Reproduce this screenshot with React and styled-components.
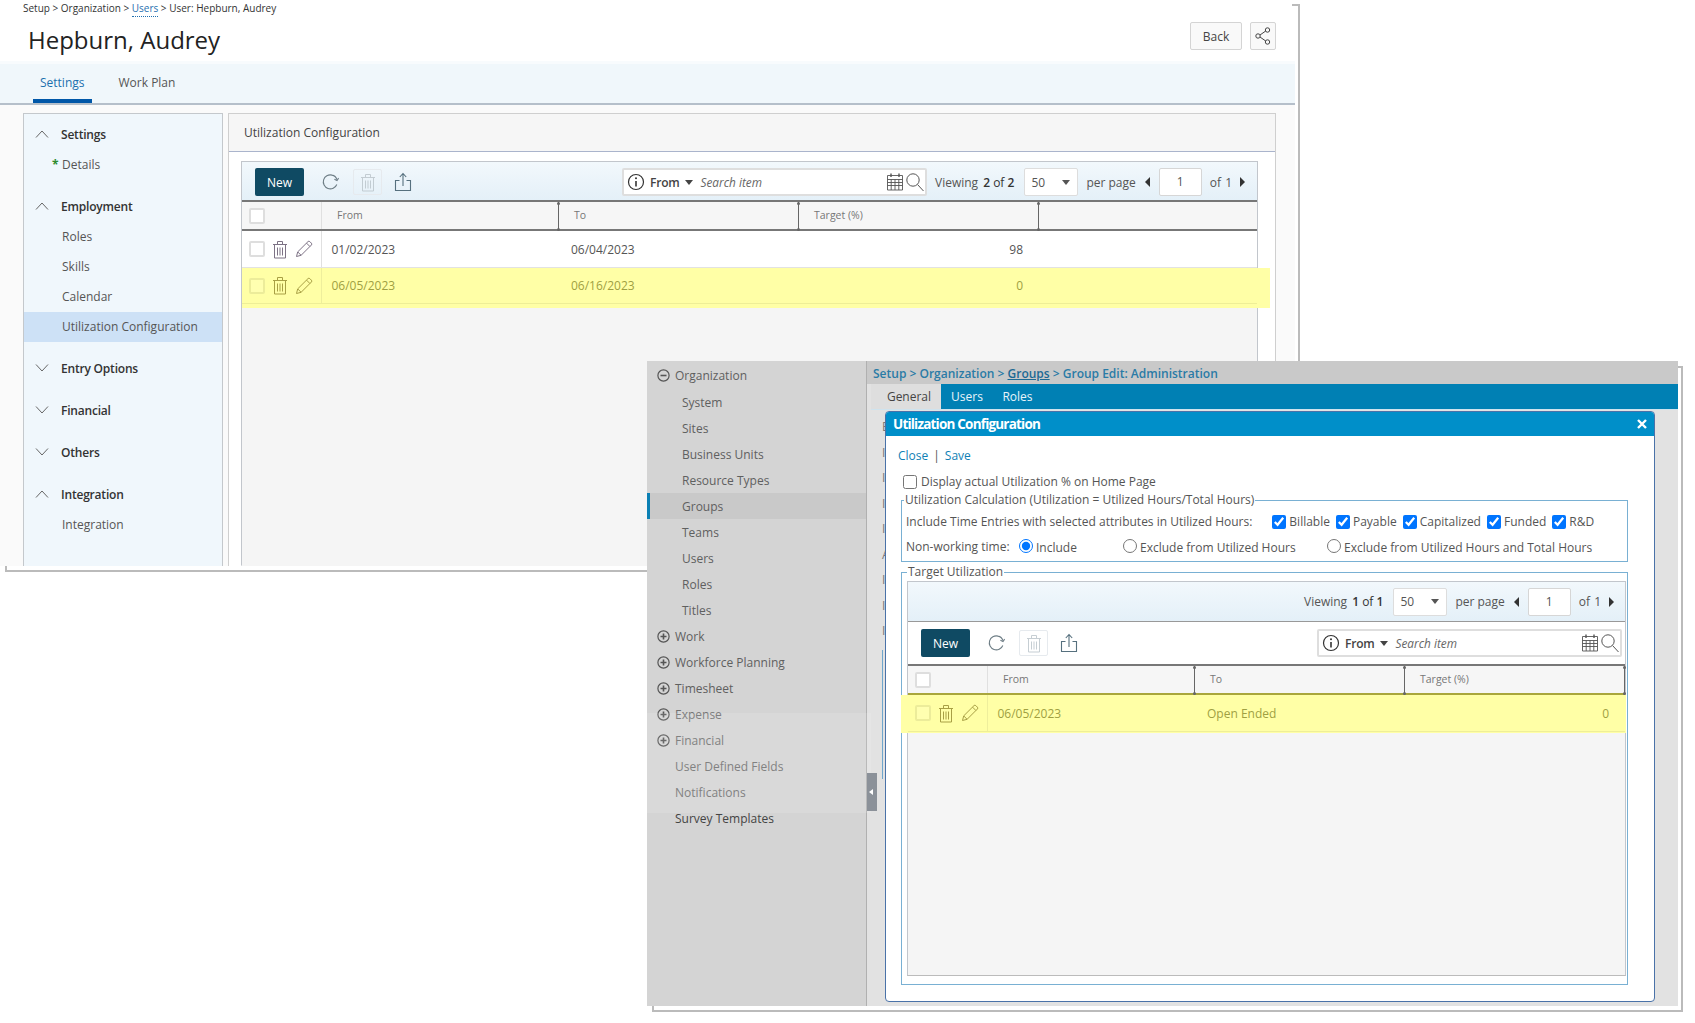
import React from "react";
import styled, { createGlobalStyle } from "styled-components";

const Global = createGlobalStyle`
  html, body { margin: 0; padding: 0; background: #fff; }
  body { font-family: "Open Sans", "Liberation Sans", sans-serif; font-size: 12px; color: #555; }
  * { box-sizing: border-box; }
`;

const Page = styled.div`
  position: relative;
  width: 1695px;
  height: 1023px;
  overflow: hidden;
  background: #fff;
`;

const Window = styled.section`
  position: absolute;
  left: ${(p) => p.$left}px;
  top: ${(p) => p.$top}px;
  width: ${(p) => p.$w}px;
  height: ${(p) => p.$h}px;
  display: flex;
  &::after {
    content: "";
    position: absolute;
    left: 5px;
    top: ${(p) => p.$frameTop}px;
    right: -5px;
    bottom: -6px;
    border-right: 2px solid #bbb;
    border-bottom: 2px solid #bbb;
    background:
      linear-gradient(#bbb, #bbb) left bottom / 2px 6px no-repeat,
      linear-gradient(#bbb, #bbb) right top / 6px 2px no-repeat;
    pointer-events: none;
    z-index: 0;
  }
`;

/* ---------- first window ---------- */
const Column = styled.div`
  flex: 1;
  min-width: 0;
  display: flex;
  flex-direction: column;
  position: relative;
  z-index: 1;
`;
const Crumbs = styled.div`
  height: 18px;
  padding-left: 23px;
  font-size: 10px;
  line-height: 17px;
  color: #333;
  white-space: nowrap;
`;
const CrumbLink = styled.span`
  color: #1f6fb0;
  border-bottom: 1px dotted #1f6fb0;
  padding-bottom: 1px;
`;
const TitleRow = styled.div`
  height: 43px;
  display: flex;
  justify-content: space-between;
  padding: 4px 19px 0 28px;
`;
const Title = styled.h1`
  margin: 1px 0 0;
  font-size: 24px;
  line-height: 34px;
  font-weight: 400;
  color: #222;
`;
const TitleActions = styled.div`
  display: flex;
  gap: 8px;
  align-items: flex-start;
`;
const PlainButton = styled.button`
  height: 28px;
  width: ${(p) => p.$w}px;
  padding: 0;
  display: flex;
  align-items: center;
  justify-content: center;
  border: 1px solid #d4d4d4;
  border-radius: 2px;
  background: #f9f9f9;
  font: inherit;
  color: #444;
`;
const TabBand = styled.nav`
  height: 44px;
  flex: none;
  display: flex;
  gap: 20px;
  padding-left: 33px;
  border-top: 3px solid #f8fbfd;
  border-bottom: 2px solid #b5bfca;
  background: #f0f7fb;
`;
const Tab = styled.div`
  height: 39px;
  padding: 0 7px;
  margin-bottom: 0;
  line-height: 38px;
  color: ${(p) => (p.$active ? "#1c6fae" : "#555")};
  border-bottom: 4px solid ${(p) => (p.$active ? "#0057a8" : "transparent")};
`;
const Body = styled.div`
  flex: 1;
  min-height: 0;
  display: flex;
  gap: 5px;
  padding: 8px 19px 0 23px;
  background: #fafafa;
`;
const Nav = styled.aside`
  width: 200px;
  flex: none;
  padding-top: 6px;
  border: 1px solid #c4c8cc;
  border-bottom: 0;
  background: #f0f7fc;
`;
const NavHead = styled.div`
  height: 30px;
  margin-top: ${(p) => (p.$first ? 0 : 12)}px;
  padding-bottom: 2px;
  display: flex;
  align-items: center;
  gap: 12px;
  padding-left: 11px;
  font-weight: 600;
  color: #333;
  letter-spacing: -0.2px;
`;
const NavItem = styled.div`
  height: 30px;
  padding-left: 38px;
  line-height: 30px;
  color: #555;
  background: ${(p) => (p.$active ? "#cde1f6" : "transparent")};
`;
const Star = styled.span`
  display: inline-block;
  width: 10px;
  margin-left: -10px;
  color: #2e8b2e;
  font-weight: 700;
`;
const Panel = styled.main`
  flex: 1;
  min-width: 0;
  display: flex;
  flex-direction: column;
  border: 1px solid #cfcfcf;
  border-bottom: 0;
  background: #fff;
`;
const PanelHead = styled.div`
  height: 38px;
  flex: none;
  padding-left: 15px;
  line-height: 37px;
  font-weight: 500;
  color: #444;
  background: #f6f6f6;
  border-bottom: 1px solid #aab4cc;
`;
const PanelBody = styled.div`
  flex: 1;
  min-height: 0;
  display: flex;
  padding: 9px 17px 0 12px;
`;
const EdgeTab = styled.div`
  position: absolute;
  left: 0;
  top: 410px;
  width: 3px;
  height: 38px;
  background: #8a9199;
`;

/* ---------- data grid ---------- */
const Grid = styled.div`
  flex: 1;
  min-width: 0;
  display: flex;
  flex-direction: column;
  border: 1px solid #c2c6cc;
  border-bottom-color: ${(p) => (p.$closed ? "#bbb" : "transparent")};
  background: #f5f5f5;
`;
const Bar = styled.div`
  height: ${(p) => p.$h}px;
  flex: none;
  display: flex;
  align-items: center;
  padding: ${(p) => p.$pt || 0}px ${(p) => p.$pr}px 0 13px;
  background: ${(p) => (p.$plain ? "#fff" : "linear-gradient(#f2f8fc, #e4f0f8)")};
  border-bottom: ${(p) => p.$line}px solid ${(p) => (p.$line > 1 ? "#777" : "#999")};
`;
const NewButton = styled.button`
  width: 49px;
  height: 28px;
  padding: 0;
  border: 0;
  border-radius: 2px;
  background: #0f4a63;
  color: #fff;
  font: 500 12px "Open Sans", sans-serif;
`;
const ToolIcon = styled.span`
  width: 22px;
  height: 22px;
  margin-left: ${(p) => p.$ml}px;
  display: flex;
  align-items: center;
  justify-content: center;
`;
const DisabledBox = styled.span`
  width: 29px;
  height: 26px;
  margin-left: 11px;
  display: flex;
  align-items: center;
  justify-content: center;
  border: 1px solid #e6eaee;
  border-radius: 2px;
`;
const Search = styled.div`
  width: 305px;
  height: 28px;
  margin-left: auto;
  display: flex;
  align-items: center;
  padding-left: 3px;
  border: 2px solid #dedede;
  border-radius: 2px;
  background: #fff;
`;
const FromText = styled.span`
  margin-left: 5px;
  font-weight: 600;
  color: #444;
  letter-spacing: -0.2px;
`;
const Placeholder = styled.span`
  flex: 1;
  margin-left: 8px;
  font-size: 11.8px;
  font-style: italic;
  color: #666;
`;
const Pager = styled.div`
  margin-left: ${(p) => p.$ml}px;
  display: flex;
  align-items: center;
  white-space: nowrap;
  color: #555;
`;
const Strong = styled.b`
  font-weight: 600;
  color: #333;
  margin-left: 5px;
`;
const OfText = styled.span`
  font-weight: 400;
`;
const SelectBox = styled.div`
  width: 54px;
  height: 28px;
  margin-left: 10px;
  display: flex;
  align-items: center;
  justify-content: space-between;
  padding: 0 7px 0 6px;
  border: 1px solid #ddd;
  border-radius: 2px;
  background: #fff;
`;
const PerPage = styled.span`
  margin-left: 8px;
`;
const PageInput = styled.div`
  width: 43px;
  height: 28px;
  margin: 0 8px 0 9px;
  text-align: center;
  line-height: 26px;
  border: 1px solid #d6d6d6;
  border-radius: 2px;
  background: #fff;
`;
const OfPages = styled.span`
  word-spacing: 1px;
`;
const Arrow = styled.span`
  width: 0;
  height: 0;
  margin: ${(p) => (p.$left ? "0 0 0 9px" : "0 0 0 8px")};
  border-top: 5.5px solid transparent;
  border-bottom: 5.5px solid transparent;
  ${(p) => (p.$left ? "border-right: 5px solid #333;" : "border-left: 5px solid #333;")}
`;
const HeaderRow = styled.div`
  height: ${(p) => p.$h}px;
  flex: none;
  display: grid;
  grid-template-columns: ${(p) => p.$cols};
  background: #f6f6f6;
  border-bottom: 2px solid ${(p) => p.$line};
`;
const HeaderCell = styled.div`
  position: relative;
  padding-left: 15px;
  line-height: 27px;
  font-size: 10.5px;
  color: #777;
`;
const Handle = styled.i`
  position: absolute;
  right: 0;
  top: 0;
  bottom: -2px;
  width: 1px;
  background: #666;
  &::before, &::after {
    content: "";
    position: absolute;
    left: -1px;
    width: 3px;
    height: 3px;
    border-radius: 50%;
    background: #666;
  }
  &::before { top: 0; }
  &::after { bottom: 0; }
`;
const RowCheckCell = styled.div`
  display: flex;
  align-items: center;
  padding-left: 7px;
  border-right: 1px solid ${(p) => (p.$hl ? "#eeee9c" : "#e0e0e0")};
`;
const Box = styled.span`
  width: 16px;
  height: 16px;
  flex: none;
  border: 2px solid ${(p) => (p.$hl ? "#ecec9a" : "#dedede")};
  border-radius: 2px;
  background: ${(p) => (p.$hl ? "#ffffb0" : "#fff")};
`;
const DataRow = styled.div`
  height: ${(p) => p.$h}px;
  display: grid;
  grid-template-columns: ${(p) => p.$cols};
  align-items: stretch;
  background: ${(p) => (p.$hl ? "transparent" : "#fff")};
  border-bottom: 1px solid ${(p) => (p.$hl ? "#eeee98" : "#e2e2e2")};
  color: ${(p) => (p.$hl ? "#a09f42" : "#555")};
`;
const Band = styled.div`
  flex: none;
  background: #ffffa6;
  margin: 0 ${(p) => -p.$right}px 0 ${(p) => -p.$left}px;
  padding: 0 ${(p) => p.$right}px ${(p) => p.$bottom}px ${(p) => p.$left}px;
`;
const Cell = styled.div`
  padding-left: ${(p) => p.$pl}px;
  padding-right: ${(p) => p.$pr || 0}px;
  display: flex;
  align-items: center;
  justify-content: ${(p) => (p.$end ? "flex-end" : "flex-start")};
`;
const Trash = styled.span`
  width: 18px;
  margin-left: 6px;
  display: flex;
  justify-content: center;
`;
const Pencil = styled.span`
  width: 20px;
  margin-left: 5px;
  display: flex;
  justify-content: center;
`;

/* ---------- second window ---------- */
const Side = styled.aside`
  width: 220px;
  flex: none;
  padding-top: 2px;
  background: #d4d4d4;
  border-right: 1px solid #b0b0b0;
  position: relative;
  z-index: 1;
  color: #5f6060;
`;
const SideRow = styled.div`
  height: 26px;
  display: flex;
  align-items: center;
  gap: 5px;
  padding-left: ${(p) => p.$pl}px;
  font-size: 12px;
  color: ${(p) => p.$color || "#5f6060"};
  background: ${(p) => (p.$active ? "#c9c9c9" : "transparent")};
  box-shadow: ${(p) => (p.$active ? "inset 3px 0 0 #0b80b4" : "none")};
  &:first-child { padding-bottom: 2px; }
`;
const FadeBand = styled.div`
  position: absolute;
  left: 0;
  top: 352px;
  width: 224px;
  height: 100px;
  background: rgba(255, 255, 255, 0.12);
  z-index: 2;
  pointer-events: none;
`;
const Collapse = styled.div`
  position: absolute;
  left: 220px;
  top: 412px;
  width: 10px;
  height: 38px;
  display: flex;
  align-items: center;
  padding-left: 2px;
  background: #8b9199;
  z-index: 3;
  &::before {
    content: "";
    border-top: 3.5px solid transparent;
    border-bottom: 3.5px solid transparent;
    border-right: 4px solid #fff;
  }
`;
const WorkArea = styled.div`
  flex: 1;
  min-width: 0;
  display: flex;
  flex-direction: column;
  position: relative;
  z-index: 1;
  background: #e2e2e2;
`;
const BlueCrumbs = styled.div`
  height: 23px;
  flex: none;
  padding-left: 6px;
  line-height: 25px;
  font-weight: 600;
  color: #2a7ba6;
  background: #c9c9c9;
  white-space: nowrap;
`;
const CrumbUnder = styled.u`
  color: #1d6a94;
`;
const BlueTabs = styled.div`
  height: 26px;
  flex: none;
  margin-left: 4px;
  display: flex;
  background: #0080b4;
  border-bottom: 1px solid #cfe3ee;
  color: #e8f4fa;
`;
const BlueTab = styled.div`
  ${(p) => p.$active && "background: #dedede; color: #444; padding-left: 6px;"}
  width: ${(p) => p.$w}px;
  text-align: center;
  line-height: 26px;
`;
const Behind = styled.div`
  flex: 1;
  margin-left: 4px;
  padding: 4px 0 0 11px;
  color: #777;
  line-height: 25.5px;
`;
const BehindEdge = styled.div`
  height: 129px;
  margin-top: 6px;
  border-left: 1px solid #6fa6cc;
`;
const Dialog = styled.div`
  position: absolute;
  left: 18px;
  top: 50px;
  width: 770px;
  height: 591px;
  display: flex;
  flex-direction: column;
  background: #fff;
  border: 1px solid #4a72a8;
  border-radius: 4px;
  overflow: hidden;
`;
const DialogBar = styled.div`
  height: 24px;
  flex: none;
  display: flex;
  align-items: center;
  justify-content: space-between;
  padding: 0 7px 0 7px;
  background: #008fc9;
  color: #fff;
  font-weight: 700;
  font-size: 13.5px;
  letter-spacing: -0.8px;
`;
const DialogLinks = styled.div`
  height: 20px;
  flex: none;
  margin: 10px 0 0 12px;
  display: flex;
  gap: 5px;
  line-height: 20px;
  color: #0f7fb5;
`;
const Sep = styled.span`
  color: #555;
`;
const DisplayRow = styled.label`
  height: 21px;
  flex: none;
  margin: 5px 0 0 17px;
  display: flex;
  align-items: center;
  gap: 4px;
  color: #555;
`;
const NativeCheck = styled.input`
  width: 14px;
  height: 14px;
  margin: 0;
  flex: none;
  accent-color: #0075ff;
`;
const Field = styled.fieldset`
  margin: ${(p) => p.$mt}px 26px 0 15px;
  padding: ${(p) => p.$pad};
  min-width: 0;
  border: 1px solid #79b0d3;
  ${(p) => p.$fill && "flex: 1; min-height: 0; margin-bottom: 16px; display: flex; flex-direction: column;"}
`;
const Legend = styled.legend`
  margin-left: ${(p) => p.$ml}px;
  padding: 0 1px;
  font-size: 12px;
  line-height: 16px;
  color: #555;
`;
const FormRow = styled.div`
  height: ${(p) => p.$h}px;
  padding-top: ${(p) => p.$pt || 0}px;
  display: flex;
  align-items: center;
  white-space: nowrap;
  color: #555;
`;
const CheckOption = styled.label`
  margin-left: ${(p) => p.$ml}px;
  display: flex;
  align-items: center;
  gap: 3px;
`;
const RadioOption = styled.label`
  width: ${(p) => p.$w}px;
  display: flex;
  align-items: center;
  gap: 3px;
  & > span { position: relative; top: 1px; }
`;
const NonWorking = styled.span`
  width: 113px;
`;

/* ---------- drawings ---------- */
const TrashIcon = ({ c = "#7d7285", o = 1 }) => (
  <svg width="16" height="19" viewBox="0 0 16 19" fill="none" stroke={c} strokeWidth="1" opacity={o}>
    <path d="M1 4.5h14M5.5 4.5V1.5h5v3M2.5 4.5v13.5h11V4.5M5.5 7.5v8M8 7.5v8M10.5 7.5v8" />
  </svg>
);
const PencilIcon = ({ c = "#7d7285" }) => (
  <svg width="18" height="18" viewBox="0 0 18 18" fill="none" stroke={c} strokeWidth="1">
    <path d="M1.5 16.5l1.2-4.6L13 1.6a1.3 1.3 0 0 1 1.8 0l1.6 1.6a1.3 1.3 0 0 1 0 1.8L6.1 15.3zM2.7 11.9l3.4 3.4M11.5 3.1l3.4 3.4" />
  </svg>
);
const RefreshIcon = () => (
  <svg width="20" height="20" viewBox="0 0 20 20" fill="none" stroke="#6d7d85" strokeWidth="1.1">
    <path d="M15.8 12.5A7 7 0 1 1 11 3.1M11 3.1c2.4.4 4.2 2.3 4.9 4.6" />
    <path d="M13.4 7.2l2.6 1.3 1.6-2.4" />
  </svg>
);
const ShareUpIcon = () => (
  <svg width="18" height="20" viewBox="0 0 18 20" fill="none" stroke="#56707e" strokeWidth="1.1">
    <path d="M5.5 8.5H1.5v10h15v-10h-4M9 14V2M5.8 5L9 1.5 12.2 5" />
  </svg>
);
const InfoIcon = () => (
  <svg width="18" height="18" viewBox="0 0 18 18" fill="none" stroke="#333">
    <circle cx="9" cy="9" r="7.5" strokeWidth="1.2" />
    <path d="M9 8v5.5" strokeWidth="1.6" />
    <circle cx="9" cy="5.2" r="1" fill="#333" stroke="none" />
  </svg>
);
const CalendarIcon = () => (
  <svg width="20" height="20" viewBox="0 0 20 20" fill="none" stroke="#555" strokeWidth="0.9" style={{ flex: "none" }}>
    <path d="M2.5 3.5h15v14.5h-15zM2.5 7.5h15M2.5 10.5h15M2.5 13.5h15M6.2 7.5V18M10 7.5V18M13.8 7.5V18" />
    <path d="M6 1.5v3.5M14 1.5v3.5" strokeWidth="1.4" />
  </svg>
);
const SearchIcon = () => (
  <svg width="20" height="20" viewBox="0 0 20 20" fill="none" stroke="#555" strokeWidth="1" style={{ flex: "none" }}>
    <circle cx="8" cy="8" r="6.2" />
    <path d="M12.6 12.6L18.5 19" />
  </svg>
);
const ShareIcon = () => (
  <svg width="16" height="18" viewBox="0 0 16 18" fill="none" stroke="#444" strokeWidth="1">
    <circle cx="3" cy="9" r="2.2" />
    <circle cx="12.5" cy="3" r="2.2" />
    <circle cx="12.5" cy="15" r="2.2" />
    <path d="M5 8l5.7-4M5 10l5.7 4" />
  </svg>
);
const Caret = ({ c = "#444" }) => (
  <svg width="8" height="5" viewBox="0 0 8 5" style={{ marginLeft: 5, flex: "none" }}>
    <path d="M0 0h8L4 5z" fill={c} />
  </svg>
);
const SelCaret = () => (
  <svg width="8" height="5" viewBox="0 0 8 5">
    <path d="M0 0h8L4 5z" fill="#555" />
  </svg>
);
const Chevron = ({ open }) => (
  <svg width="14" height="8" viewBox="0 0 14 8" fill="none" stroke="#666" strokeWidth="1" style={{ flex: "none" }}>
    <path d={open ? "M1 7.5L7 1l6 6.5" : "M1 .5L7 7l6-6.5"} />
  </svg>
);
const Circle = ({ plus }) => (
  <svg width="13" height="13" viewBox="0 0 13 13" fill="none" stroke="#555" style={{ flex: "none" }}>
    <circle cx="6.5" cy="6.5" r="5.6" strokeWidth="1.2" />
    <path d={plus ? "M3.5 6.5h6M6.5 3.5v6" : "M3.5 6.5h6"} strokeWidth="1.6" />
  </svg>
);
const CloseX = () => (
  <svg width="10" height="10" viewBox="0 0 10 10" stroke="#fff" strokeWidth="2.4">
    <path d="M1 1l8 8M9 1l-8 8" />
  </svg>
);

/* ---------- composed parts ---------- */
const Actions = () => (
  <>
    <NewButton>New</NewButton>
    <ToolIcon $ml={16}><RefreshIcon /></ToolIcon>
    <DisabledBox><TrashIcon c="#b9c3c9" o={0.8} /></DisabledBox>
    <ToolIcon $ml={10}><ShareUpIcon /></ToolIcon>
  </>
);
const SearchBox = () => (
  <Search>
    <InfoIcon />
    <FromText>From</FromText>
    <Caret />
    <Placeholder>Search item</Placeholder>
    <CalendarIcon />
    <SearchIcon />
  </Search>
);
const PagerBlock = ({ count, ml }) => (
  <Pager $ml={ml}>
    Viewing
    <Strong>{count} <OfText>of</OfText> {count}</Strong>
    <SelectBox>50<SelCaret /></SelectBox>
    <PerPage>per page</PerPage>
    <Arrow $left />
    <PageInput>1</PageInput>
    <OfPages>of 1</OfPages>
    <Arrow />
  </Pager>
);
const Header = ({ cols, h, line }) => (
  <HeaderRow $cols={cols} $h={h} $line={line}>
    <RowCheckCell><Box /></RowCheckCell>
    <HeaderCell>From<Handle /></HeaderCell>
    <HeaderCell>To<Handle /></HeaderCell>
    <HeaderCell>Target (%)<Handle /></HeaderCell>
  </HeaderRow>
);
const Row = ({ cols, h, from, to, value, hl, pr }) => (
  <DataRow $cols={cols} $h={h} $hl={hl}>
    <RowCheckCell $hl={hl}>
      <Box $hl={hl} />
      <Trash><TrashIcon c={hl ? "#a89f45" : "#7d7285"} /></Trash>
      <Pencil><PencilIcon c={hl ? "#a89f45" : "#7d7285"} /></Pencil>
    </RowCheckCell>
    <Cell $pl={9.5}>{from}</Cell>
    <Cell $pl={12}>{to}</Cell>
    <Cell $pl={0} $pr={pr} $end>{value}</Cell>
  </DataRow>
);

const NAV = [
  { head: "Settings", open: true, items: ["Details"] },
  { head: "Employment", open: true, items: ["Roles", "Skills", "Calendar", "Utilization Configuration"] },
  { head: "Entry Options" },
  { head: "Financial" },
  { head: "Others" },
  { head: "Integration", open: true, items: ["Integration"] },
];
const SIDE = [
  { t: "Organization", icon: "minus" },
  { t: "System", sub: true },
  { t: "Sites", sub: true },
  { t: "Business Units", sub: true },
  { t: "Resource Types", sub: true },
  { t: "Groups", sub: true, active: true },
  { t: "Teams", sub: true },
  { t: "Users", sub: true },
  { t: "Roles", sub: true },
  { t: "Titles", sub: true },
  { t: "Work", icon: "plus" },
  { t: "Workforce Planning", icon: "plus" },
  { t: "Timesheet", icon: "plus" },
  { t: "Expense", icon: "plus", color: "#707070" },
  { t: "Financial", icon: "plus", color: "#707070" },
  { t: "User Defined Fields", color: "#707070" },
  { t: "Notifications", color: "#707070" },
  { t: "Survey Templates", color: "#444" },
];
const COLS1 = "80px 237px 240px 240px 1fr";
const COLS2 = "80px 207px 210px 220px";

export default function App() {
  return (
    <Page>
      <Global />
      <Window $left={0} $top={0} $w={1295} $h={566} $frameTop={4}>
        <Column>
          <Crumbs>Setup &gt; Organization &gt; <CrumbLink>Users</CrumbLink> &gt; User: Hepburn, Audrey</Crumbs>
          <TitleRow>
            <Title>Hepburn, Audrey</Title>
            <TitleActions>
              <PlainButton $w={52}>Back</PlainButton>
              <PlainButton $w={26}><ShareIcon /></PlainButton>
            </TitleActions>
          </TitleRow>
          <TabBand>
            <Tab $active>Settings</Tab>
            <Tab>Work Plan</Tab>
          </TabBand>
          <Body>
            <Nav>
              {NAV.map((g, i) => (
                <div key={g.head}>
                  <NavHead $first={i === 0}><Chevron open={g.open} />{g.head}</NavHead>
                  {(g.items || []).map((it) => (
                    <NavItem key={it} $active={it === "Utilization Configuration"}>
                      {it === "Details" && <Star>*</Star>}{it}
                    </NavItem>
                  ))}
                </div>
              ))}
            </Nav>
            <Panel>
              <PanelHead>Utilization Configuration</PanelHead>
              <PanelBody>
                <Grid>
                  <Bar $h={40} $line={2} $pr={12} $pt={2}>
                    <Actions />
                    <SearchBox />
                    <PagerBlock count={2} ml={8} />
                  </Bar>
                  <Header cols={COLS1} h={29} line="#777" />
                  <Row cols={COLS1} h={37} from="01/02/2023" to="06/04/2023" value="98" pr={16} />
                  <Band $left={0} $right={13} $bottom={4}>
                    <Row cols={COLS1} h={36} from="06/05/2023" to="06/16/2023" value="0" pr={16} hl />
                  </Band>
                </Grid>
              </PanelBody>
            </Panel>
          </Body>
        </Column>
        <EdgeTab />
      </Window>

      <Window $left={647} $top={361} $w={1031} $h={645} $frameTop={5}>
        <Side>
          {SIDE.map((r) => (
            <SideRow key={r.t} $pl={r.sub ? 35 : r.icon ? 10 : 28} $active={r.active} $color={r.color}>
              {r.icon && <Circle plus={r.icon === "plus"} />}
              {r.t}
            </SideRow>
          ))}
        </Side>
        <FadeBand />
        <Collapse />
        <WorkArea>
          <BlueCrumbs>Setup &gt; Organization &gt; <CrumbUnder>Groups</CrumbUnder> &gt; Group Edit: Administration</BlueCrumbs>
          <BlueTabs>
            <BlueTab $active $w={70}>General</BlueTab>
            <BlueTab $w={52}>Users</BlueTab>
            <BlueTab $w={49}>Roles</BlueTab>
          </BlueTabs>
          <Behind>
            {["E", "I", "I", "I", "I", "A", "I", "I", "I"].map((c, i) => <div key={i}>{c}</div>)}
            <BehindEdge />
          </Behind>
          <Dialog>
            <DialogBar>Utilization Configuration<CloseX /></DialogBar>
            <DialogLinks><span>Close</span><Sep>|</Sep><span>Save</span></DialogLinks>
            <DisplayRow><NativeCheck type="checkbox" />Display actual Utilization % on Home Page</DisplayRow>
            <Field $mt={0} $pad="0 5px 3px 4px">
              <Legend $ml={-2}>Utilization Calculation (Utilization = Utilized Hours/Total Hours)</Legend>
              <FormRow $h={26} $pt={1}>
                Include Time Entries with selected attributes in Utilized Hours:
                {["Billable", "Payable", "Capitalized", "Funded", "R&D"].map((l, i) => (
                  <CheckOption key={l} $ml={i === 0 ? 20 : 6}>
                    <NativeCheck type="checkbox" defaultChecked />{l}
                  </CheckOption>
                ))}
              </FormRow>
              <FormRow $h={24}>
                <NonWorking>Non-working time:</NonWorking>
                <RadioOption $w={104}><NativeCheck type="radio" name="nw" defaultChecked /><span>Include</span></RadioOption>
                <RadioOption $w={204}><NativeCheck type="radio" name="nw" /><span>Exclude from Utilized Hours</span></RadioOption>
                <RadioOption $w={270}><NativeCheck type="radio" name="nw" /><span>Exclude from Utilized Hours and Total Hours</span></RadioOption>
              </FormRow>
            </Field>
            <Field $mt={2} $pad="1px 1px 8px 5px" $fill>
              <Legend $ml={0}>Target Utilization</Legend>
              <Grid $closed>
                <Bar $h={40} $line={1} $pr={5}>
                  <PagerBlock count={1} ml={383} />
                </Bar>
                <Bar $h={44} $line={2} $pr={3} $plain>
                  <Actions />
                  <SearchBox />
                </Bar>
                <Header cols={COLS2} h={29} line="#a9a63c" />
                <Band $left={7} $right={1} $bottom={1}>
                  <Row cols={COLS2} h={37} from="06/05/2023" to="Open Ended" value="0" pr={16} hl />
                </Band>
              </Grid>
            </Field>
          </Dialog>
        </WorkArea>
      </Window>
    </Page>
  );
}
